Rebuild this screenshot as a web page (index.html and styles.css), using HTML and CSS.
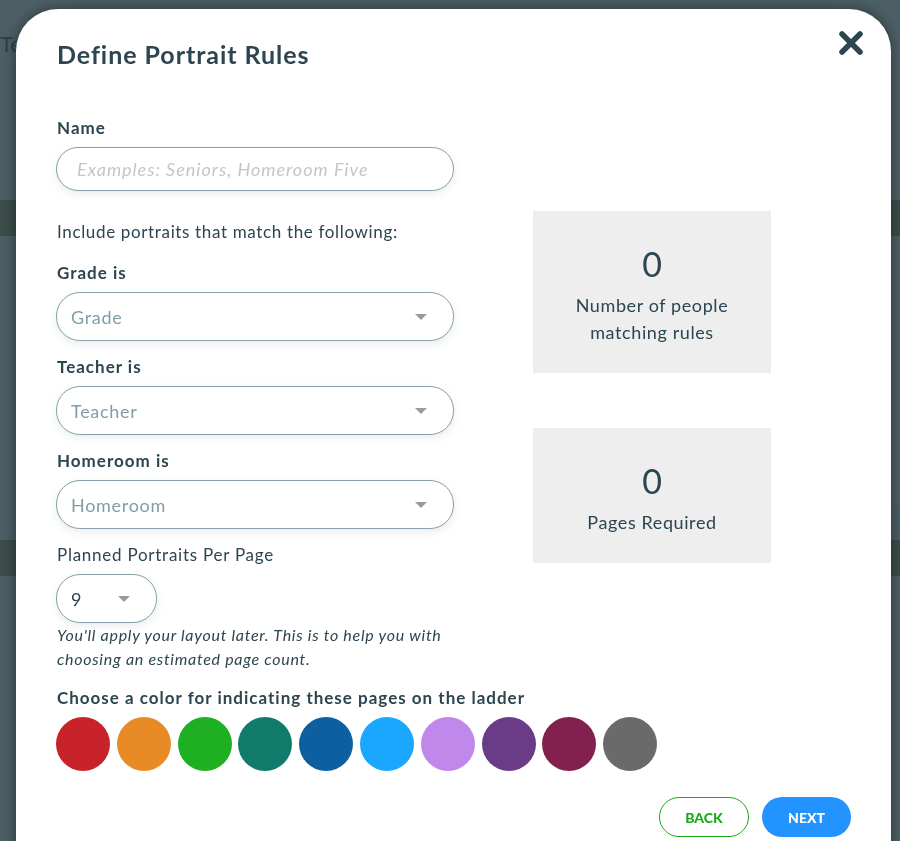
FILE: index.html
```html
<!DOCTYPE html>
<html lang="en">
<head>
<meta charset="utf-8">
<title>Define Portrait Rules</title>
<link rel="stylesheet" href="styles.css">
</head>
<body>
<div class="page">
  <div class="page-head">Team</div>
  <div class="page-row band"></div>
  <div class="page-row row-gap2"></div>
  <div class="page-row light"></div>
  <div class="page-row band"></div>
</div>
<div class="overlay"></div>

<div class="modal">
  <div class="modal-head">
    <h1 class="title">Define Portrait Rules</h1>
    <button class="close" aria-label="Close">
      <svg width="28" height="28" viewBox="0 0 28 28"><path d="M5 5 L23 23 M23 5 L5 23" stroke="#2c4550" stroke-width="5.5" stroke-linecap="round"/></svg>
    </button>
  </div>

  <div class="upper">
    <div class="form-col">
      <label class="label">Name</label>
      <div class="input"><span class="placeholder">Examples: Seniors, Homeroom Five</span></div>

      <p class="intro">Include portraits that match the following:</p>

      <label class="label">Grade is</label>
      <div class="select"><span>Grade</span><i class="caret"></i></div>

      <label class="label next">Teacher is</label>
      <div class="select"><span>Teacher</span><i class="caret"></i></div>

      <label class="label next">Homeroom is</label>
      <div class="select"><span>Homeroom</span><i class="caret"></i></div>

      <label class="label plain next">Planned Portraits Per Page</label>
      <div class="select small"><span class="val">9</span><i class="caret"></i></div>
      <p class="help">You'll apply your layout later. This is to help you with choosing an estimated page count.</p>
    </div>

    <div class="stats-col">
      <div class="stat">
        <div class="num">0</div>
        <div class="cap">Number of people<br>matching rules</div>
      </div>
      <div class="stat">
        <div class="num">0</div>
        <div class="cap">Pages Required</div>
      </div>
    </div>
  </div>

  <div class="colors">
    <div class="label">Choose a color for indicating these pages on the ladder</div>
    <div class="swatches">
      <span class="sw c1"></span>
      <span class="sw c2"></span>
      <span class="sw c3"></span>
      <span class="sw c4"></span>
      <span class="sw c5"></span>
      <span class="sw c6"></span>
      <span class="sw c7"></span>
      <span class="sw c8"></span>
      <span class="sw c9"></span>
      <span class="sw c10"></span>
    </div>
  </div>

  <div class="footer">
    <button class="btn back">BACK</button>
    <button class="btn next-btn">NEXT</button>
  </div>
</div>
</body>
</html>
```

FILE: styles.css
```css
* { box-sizing: border-box; }
html, body { margin: 0; padding: 0; height: 100%; overflow: hidden; }
body {
  font-family: "Lato", "Open Sans", sans-serif;
  color: #2c4550;
  background: #f3f5f5;
}

/* background page */
.page { width: 900px; height: 841px; background: #ffffff; }
.page-head { height: 200px; padding: 30px 0 0 0; font-size: 22px; color: #555; }
.page-row { height: 36px; }
.band { background: #9c9a6a; height: 36px; }
.row-gap2 { height: 269px; }
.light { background: #f4f6f6; height: 35px; }

.overlay {
  position: fixed; inset: 0;
  background: rgba(36, 60, 67, 0.82);
}

/* modal */
.modal {
  position: fixed;
  top: 9px; left: 16px;
  width: 875px; height: 880px;
  background: #fff;
  border-radius: 42px;
  box-shadow: 0 0 14px rgba(0,0,0,0.45);
  padding: 0 40px 0 40px;
}

.modal-head {
  display: flex; justify-content: space-between; align-items: flex-start;
}
.title {
  margin: 30px 0 0 1px;
  font-size: 25px; line-height: 30px; font-weight: 700;
  letter-spacing: 0.95px;
}
.close {
  margin: 20px -14px 0 0;
  padding: 0; border: 0; background: none; width: 28px; height: 28px;
  display: block;
}
.close svg { display: block; }

.upper { display: flex; gap: 79px; margin-top: 49px; }
.form-col { width: 398px; display: flex; flex-direction: column; }
.stats-col { width: 238px; margin-top: 93px; display: flex; flex-direction: column; gap: 55px; }

.label {
  display: block;
  font-size: 17px; line-height: 20px; font-weight: 700;
  letter-spacing: 1px;
  margin: 0 0 9px 1px;
}
.label.next { margin-top: 16px; }
.label.plain { font-weight: 400; letter-spacing: 0.75px; }

.input, .select {
  height: 44px;
  border: 1px solid #86a1a8;
  border-radius: 24px;
  box-shadow: 0 3px 8px rgba(40, 70, 80, 0.10);
  display: flex; align-items: center;
  background: #fff;
}
.input { padding-left: 20px; }
.placeholder { font-style: italic; color: #c3c6c8; font-size: 18px; letter-spacing: 1px; }

.select { height: 49px; padding: 0 26px 0 14px; justify-content: space-between; }
.select span { font-size: 18px; color: #7f9ea6; letter-spacing: 0.7px; }
.select .val { color: #2c4550; }
.select.small { width: 101px; }
.caret {
  width: 0; height: 0;
  border-left: 6px solid transparent; border-right: 6px solid transparent;
  border-top: 6px solid #9a9a9a;
}

.intro { margin: 31px 0 21px 1px; font-size: 17px; line-height: 20px; letter-spacing: 0.65px; }

.help {
  margin: 0 0 0 1px;
  font-style: italic; font-size: 16px; line-height: 24px;
  letter-spacing: 0.72px;
}

.stat {
  background: #eeeeee;
  text-align: center;
  padding: 33px 10px 27px;
}
.num { font-size: 34px; line-height: 40px; }
.cap { margin-top: 8px; font-size: 18px; line-height: 27px; letter-spacing: 0.6px; }

.colors { margin-top: 17px; }
.colors .label { margin-bottom: 9px; }
.swatches { display: flex; gap: 6.8px; }
.sw { width: 54px; height: 54px; border-radius: 50%; display: block; flex: none; }
.c1 { background: #c8222a; }
.c2 { background: #e88a26; }
.c3 { background: #1eb022; }
.c4 { background: #117b6b; }
.c5 { background: #0d5fa0; }
.c6 { background: #1aa7fd; }
.c7 { background: #c088ea; }
.c8 { background: #6a3c87; }
.c9 { background: #82214e; }
.c10 { background: #6a6a6a; }

.footer { display: flex; justify-content: flex-end; gap: 13px; margin-top: 26px; }
.btn {
  height: 40px; border-radius: 20px;
  font-family: "Lato", sans-serif; font-weight: 900; font-size: 14px;
  padding: 0; cursor: pointer;
}
.back { width: 90px; background: #fff; border: 1px solid #1aaa1a; color: #1aaa1a; }
.next-btn { width: 89px; background: #2293ff; border: 0; color: #fff; }
```
